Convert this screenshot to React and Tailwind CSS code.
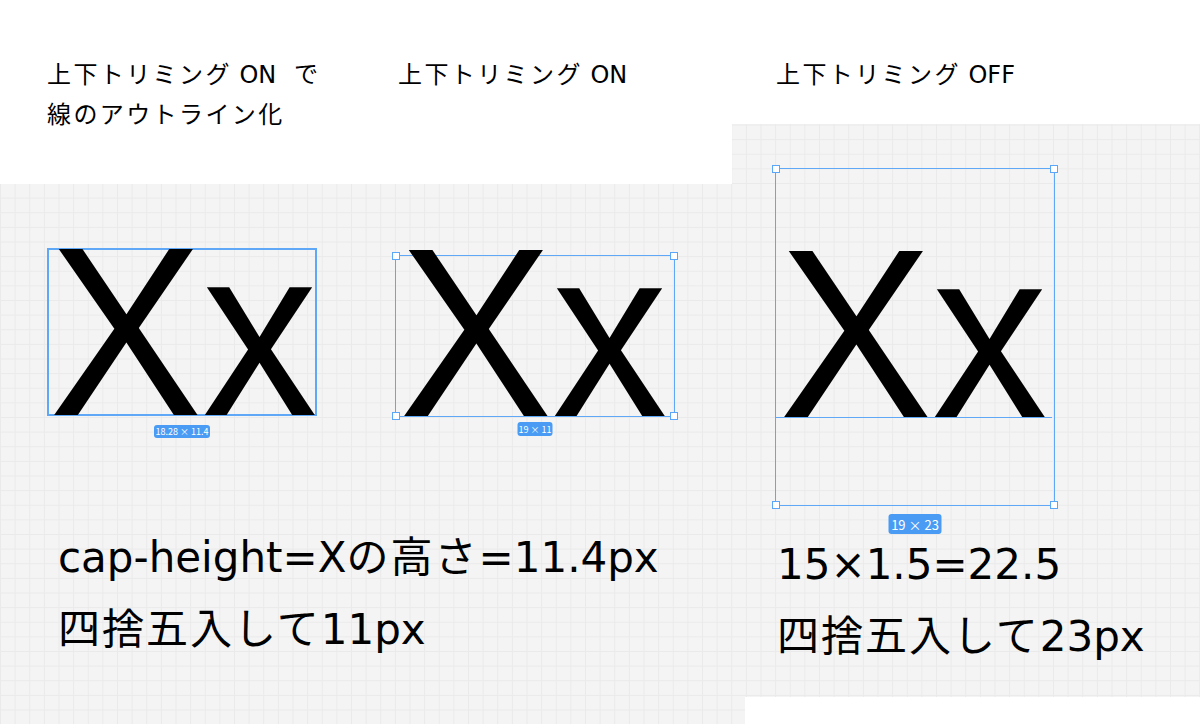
import React from "react";

const grid =
  "bg-[#f4f4f4] bg-fixed bg-[linear-gradient(to_right,#eaeaea_1px,transparent_1px),linear-gradient(to_bottom,#eaeaea_1px,transparent_1px)] bg-[size:14.64px_14.64px] bg-[position:0px_7.5px]";

const font = {
  fontFamily: '"DejaVu Sans", "Noto Sans CJK JP", "Noto Sans", sans-serif',
};
const cjk = { fontFamily: '"Noto Sans CJK JP", "Noto Sans", sans-serif' };
const arial = { fontFamily: '"Liberation Sans", Arial, sans-serif' };

function Handle({ pos }) {
  return (
    <div
      className={`absolute w-[8px] h-[8px] bg-white border border-[#5aa6f8] ${pos}`}
    />
  );
}

function Badge({ children, className }) {
  return (
    <div
      className={`absolute left-1/2 -translate-x-1/2 flex items-center justify-center rounded-[3px] bg-[#4a9bf3] text-white leading-none whitespace-nowrap ${className}`}
      style={cjk}
    >
      {children}
    </div>
  );
}

function J({ children }) {
  return <span className="tracking-[2.4px]">{children}</span>;
}

function K({ children }) {
  return <span className="tracking-[2px]">{children}</span>;
}

function BigXx({ top, left }) {
  return (
    <span
      className="absolute block origin-left scale-x-[0.95] text-[242px] leading-[150px] whitespace-nowrap"
      style={{ ...arial, top: top, left: left }}
    >
      Xx
    </span>
  );
}

export default function App() {
  return (
    <div
      className="flex w-[1200px] h-[724px] overflow-hidden bg-white text-black"
      style={font}
    >
      {/* Left column */}
      <div className="flex flex-col w-[732px] shrink-0">
        <div className="h-[184px] shrink-0 bg-white flex text-[24px] leading-[40px]">
          <div className="pt-[55px] pl-[47px] w-[398px] shrink-0">
            <div>
              <J>上下トリミング</J> ON <span className="ml-[10px]">で</span>
            </div>
            <div>
              <J>線のアウトライン化</J>
            </div>
          </div>
          <div className="pt-[55px]">
            <J>上下トリミング</J> ON
          </div>
        </div>
        <div className={`flex-1 flex flex-col ${grid}`}>
          <div className="flex items-start">
            {/* Figure 1 */}
            <div className="relative ml-[47px] mt-[64px] w-[270px] h-[168px] border-2 border-[#5ea8f7]">
              <BigXx top={6} left={0} />
              <Badge className="top-[175px] w-[56px] h-[13px] text-[9px]">
                18.28 × 11.4
              </Badge>
            </div>
            {/* Figure 2 */}
            <div className="relative ml-[78px] mt-[71px] w-[280px] h-[162px] border border-[#5ea8f7]">
              <BigXx top={1} left={3} />
              <Handle pos="-left-[4px] -top-[4px]" />
              <Handle pos="-right-[4px] -top-[4px]" />
              <Handle pos="-left-[4px] -bottom-[4px]" />
              <Handle pos="-right-[4px] -bottom-[4px]" />
              <Badge className="top-[166px] w-[35px] h-[14px] text-[9px]">
                19 × 11
              </Badge>
            </div>
          </div>
          <div className="pl-[58px] mt-[105px] text-[42px] leading-[72px]">
            <div>
              cap-height=X<K>の高さ</K>=11.4px
            </div>
            <div>
              <K>四捨五入して</K>11px
            </div>
          </div>
        </div>
      </div>

      {/* Right column */}
      <div className="flex flex-col flex-1">
        <div className="h-[124px] shrink-0 bg-white pt-[55px] pl-[44px] text-[24px] leading-[40px]">
          <J>上下トリミング</J> OFF
        </div>
        <div className={`h-[573px] shrink-0 flex flex-col ${grid}`}>
          {/* Figure 3 */}
          <div className="relative ml-[43px] mt-[44px] w-[280px] h-[338px] border border-[#5ea8f7]">
            <BigXx top={89} left={3} />
            <div className="absolute left-0 right-[2px] top-[248px] h-px bg-[#5ea8f7]" />
            <Handle pos="-left-[4px] -top-[4px]" />
            <Handle pos="-right-[4px] -top-[4px]" />
            <Handle pos="-left-[4px] -bottom-[4px]" />
            <Handle pos="-right-[4px] -bottom-[4px]" />
            <Badge className="top-[345px] w-[53px] h-[20px] text-[13px]">
              19 × 23
            </Badge>
          </div>
          <div className="pl-[45px] mt-[23px] text-[42px] leading-[72px]">
            <div>15×1.5=22.5</div>
            <div>
              <K>四捨五入して</K>23px
            </div>
          </div>
        </div>
        <div className="flex flex-1">
          <div className={`w-[13px] ${grid}`} />
          <div className="flex-1 bg-white" />
        </div>
      </div>
    </div>
  );
}
